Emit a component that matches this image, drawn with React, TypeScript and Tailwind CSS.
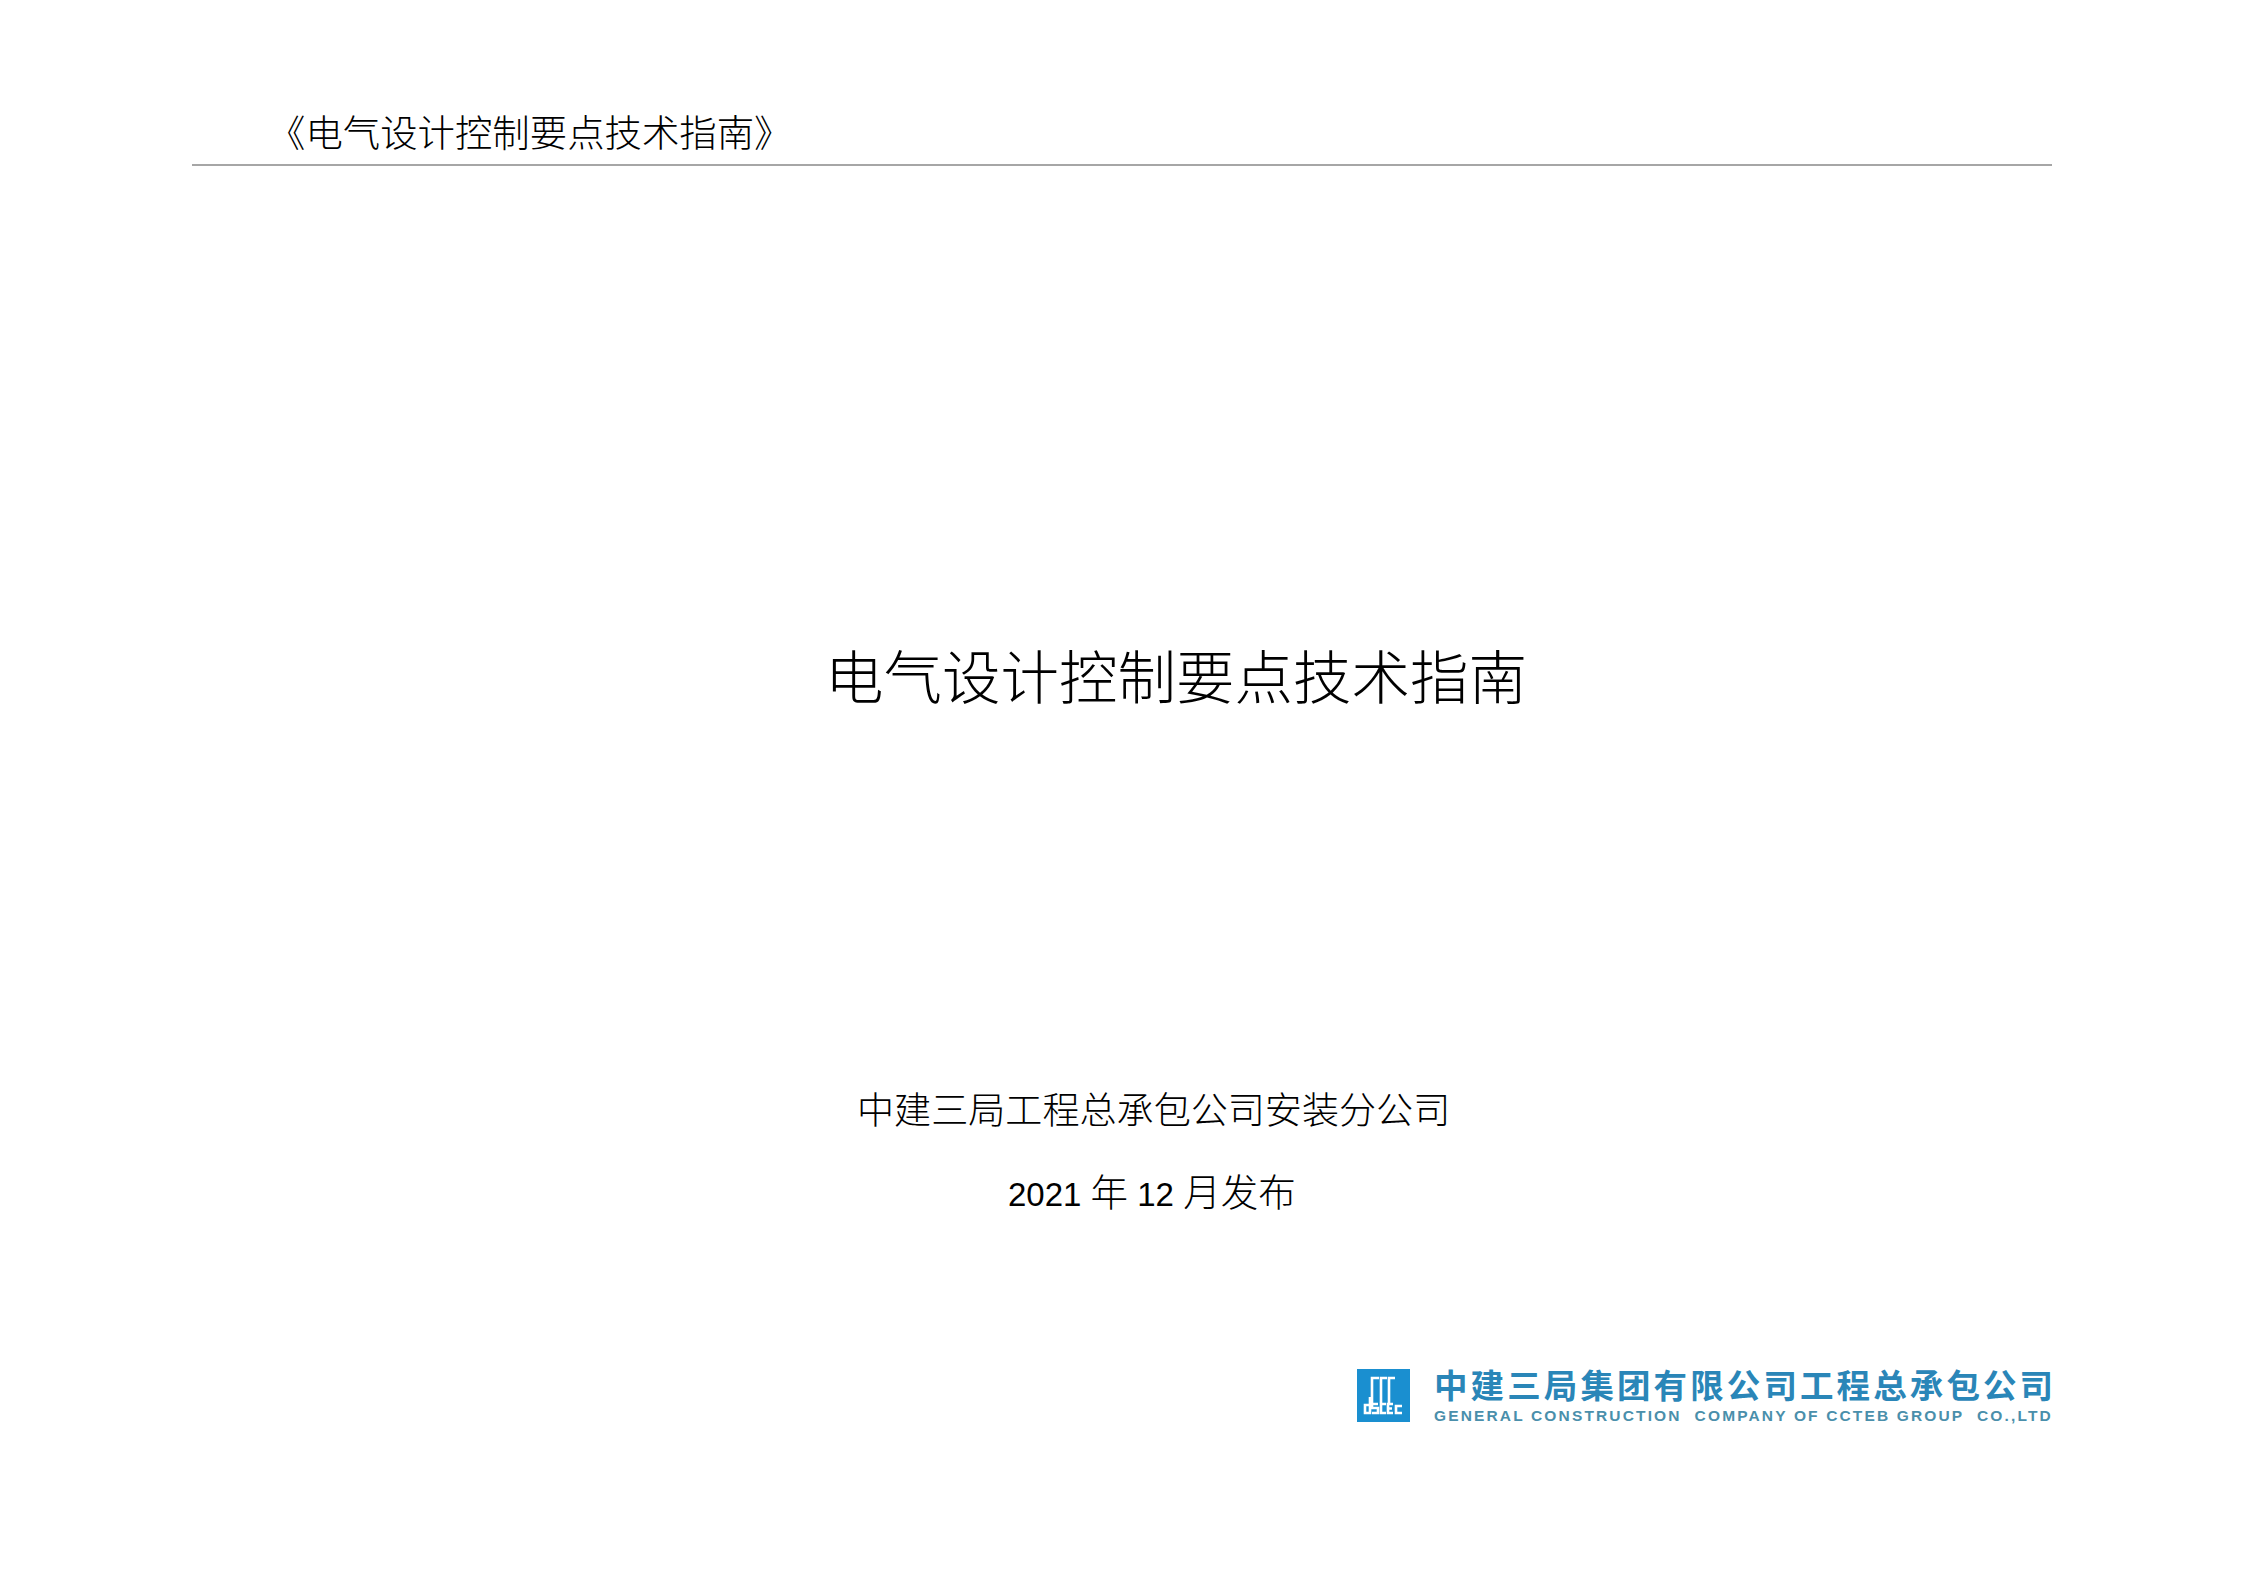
import React from 'react';

const serif = 'font-["Noto_Sans_CJK_SC",sans-serif]';

// CSCEC mark, white strokes on blue
const LogoMark = () => (
  <svg viewBox="0 0 53 53" className="w-[53px] h-[53px] shrink-0">
    <rect width="53" height="53" fill="#1a8fd0" />
    <g fill="none" stroke="#fff" strokeWidth="2.6">
      <path d="M22 9h-7v25" />
      <path d="M30 9h-6v25" />
      <path d="M38 9h-6v25" />
      <path d="M13 28v16H8v-8h5" />
      <path d="M21 35h-6v4h6v5h-6" />
      <path d="M29 35h-5v9h5" />
      <path d="M36 35h-5v9h5M31 39.500h4" />
      <path d="M45 37h-6v7h6" />
    </g>
  </svg>
);

export default function App() {
  return (
    <div className={`w-[2242px] h-[1586px] bg-white text-black flex flex-col overflow-hidden ${serif}`}>
      {/* running header */}
      <div className="mt-[108px] ml-[192px] mr-[190px] border-b-2 border-[#a6a6a6] pl-[76px] pb-[8px] h-[58px] flex items-center text-[37.400px] leading-none font-light">
        《电气设计控制要点技术指南》
      </div>

      <h1 className="mt-[473px] ml-[825px] text-[58.500px] leading-[70px] font-light">电气设计控制要点技术指南</h1>

      <p className="mt-[376px] ml-[857px] text-[37.100px] leading-[46px] font-light">中建三局工程总承包公司安装分公司</p>
      <p className="mt-[39px] ml-[1008px] text-[33px] leading-[46px] font-['Liberation_Sans','Noto_Sans_CJK_SC',sans-serif]">
        2021 <span className="text-[37.500px] font-light">年</span> 12 <span className="text-[37.500px] font-light">月发布</span>
      </p>

      {/* company logo */}
      <div className="mt-[151px] ml-[1357px] w-[696px] flex items-start justify-between">
        <LogoMark />
        <div className="w-[619px] flex flex-col">
          <div className="-mt-[3px] text-[33.500px] leading-[36px] tracking-[3.100px] font-bold text-[#2a86b8] whitespace-nowrap">中建三局集团有限公司工程总承包公司</div>
          <div className="mt-[6px] text-[15.500px] leading-[16px] font-bold tracking-[2.150px] text-[#4a8fab] whitespace-pre font-['Liberation_Sans',sans-serif]">
            GENERAL CONSTRUCTION  COMPANY OF CCTEB GROUP  CO.,LTD
          </div>
        </div>
      </div>
    </div>
  );
}
